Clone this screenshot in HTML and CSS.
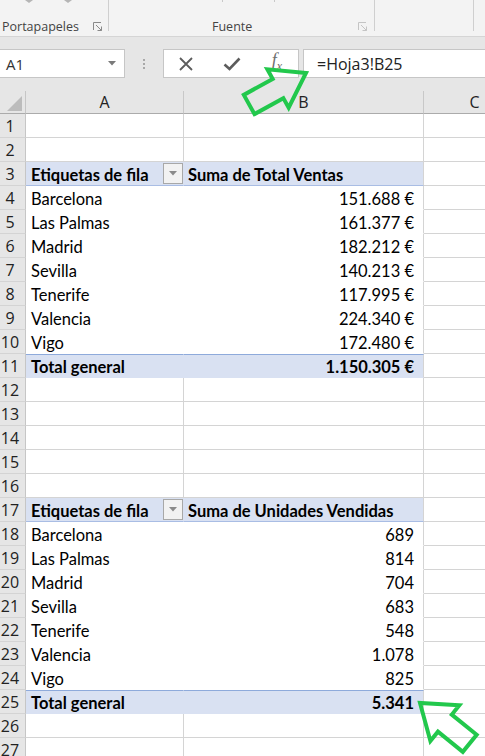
FILE: index.html
```html
<!DOCTYPE html>
<html lang="es">
<head>
<meta charset="utf-8">
<title>Excel</title>
<link rel="stylesheet" href="styles.css">
</head>
<body>
<div class="ribbon">
  <div class="grp g1">
    <div class="gtop"><span class="tri t1"></span><span class="tri t2"></span></div>
    <div class="glabel"><span class="lbl">Portapapeles</span><svg class="launch" width="10" height="10" viewBox="0 0 10 10"><path d="M0.5 8V0.5H8" fill="none" stroke="#8a8a8a"/><path d="M3 3L8.5 8.5M8.5 4.5V8.5H4.5" fill="none" stroke="#8a8a8a"/></svg></div>
  </div>
  <div class="sep"></div>
  <div class="grp g2">
    <div class="gtop"><span class="tick k1"></span><span class="tick k2"></span></div>
    <div class="glabel"><span class="lbl fuente">Fuente</span><svg class="launch l2" width="10" height="10" viewBox="0 0 10 10"><path d="M0.5 8V0.5H8" fill="none" stroke="#c4c4c4"/><path d="M3 3L8.5 8.5M8.5 4.5V8.5H4.5" fill="none" stroke="#c4c4c4"/></svg></div>
  </div>
  <div class="sep"></div>
  <div class="grp g3"></div>
  <div class="sep"></div>
</div>

<div class="fbar">
  <div class="namebox"><span>A1</span><svg width="8" height="5" viewBox="0 0 8 5"><path d="M0 0H8L4 4.5Z" fill="#7a7a7a"/></svg></div>
  <div class="grip"><i></i><i></i><i></i></div>
  <div class="fbtns">
    <span class="slot s1"><svg width="16" height="16" viewBox="0 0 16 16"><path d="M2 2L14 14M14 2L2 14" stroke="#5c5c5c" stroke-width="1.8" fill="none"/></svg></span>
    <span class="slot s2"><svg width="18" height="14" viewBox="0 0 18 14"><path d="M1.5 7.5L6.5 12L16.5 1.5" stroke="#5c5c5c" stroke-width="2.6" fill="none"/></svg></span>
    <span class="slot s3"><span class="fx">f<sub>x</sub></span></span>
  </div>
  <div class="finput">=Hoja3!B25</div>
</div>

<div class="sheet">
  <div class="corner"><svg width="26" height="23" viewBox="0 0 26 23"><path d="M7 20H22V5Z" fill="#bcbcbc"/></svg></div>
  <div class="ch">A</div>
  <div class="ch">B</div>
  <div class="ch">C</div>

  <div class="rh">1</div><div class="c"></div><div class="c"></div><div class="c"></div>
  <div class="rh">2</div><div class="c"></div><div class="c"></div><div class="c"></div>

  <div class="rh">3</div><div class="c pa ph hdr"><span>Etiquetas de fila</span><span class="dd"><svg width="8" height="5" viewBox="0 0 8 5"><path d="M0 0H8L4 4.5Z" fill="#8a8a8a"/></svg></span></div><div class="c pb ph">Suma de Total Ventas</div><div class="c"></div>
  <div class="rh">4</div><div class="c pa">Barcelona</div><div class="c pb num">151.688 €</div><div class="c"></div>
  <div class="rh">5</div><div class="c pa">Las Palmas</div><div class="c pb num">161.377 €</div><div class="c"></div>
  <div class="rh">6</div><div class="c pa">Madrid</div><div class="c pb num">182.212 €</div><div class="c"></div>
  <div class="rh">7</div><div class="c pa">Sevilla</div><div class="c pb num">140.213 €</div><div class="c"></div>
  <div class="rh">8</div><div class="c pa">Tenerife</div><div class="c pb num">117.995 €</div><div class="c"></div>
  <div class="rh">9</div><div class="c pa">Valencia</div><div class="c pb num">224.340 €</div><div class="c"></div>
  <div class="rh">10</div><div class="c pa">Vigo</div><div class="c pb num">172.480 €</div><div class="c"></div>
  <div class="rh">11</div><div class="c pa pt">Total general</div><div class="c pb pt num">1.150.305 €</div><div class="c"></div>

  <div class="rh">12</div><div class="c"></div><div class="c"></div><div class="c"></div>
  <div class="rh">13</div><div class="c"></div><div class="c"></div><div class="c"></div>
  <div class="rh">14</div><div class="c"></div><div class="c"></div><div class="c"></div>
  <div class="rh">15</div><div class="c"></div><div class="c"></div><div class="c"></div>
  <div class="rh">16</div><div class="c"></div><div class="c"></div><div class="c"></div>

  <div class="rh">17</div><div class="c pa ph hdr"><span>Etiquetas de fila</span><span class="dd"><svg width="8" height="5" viewBox="0 0 8 5"><path d="M0 0H8L4 4.5Z" fill="#8a8a8a"/></svg></span></div><div class="c pb ph">Suma de Unidades Vendidas</div><div class="c"></div>
  <div class="rh">18</div><div class="c pa">Barcelona</div><div class="c pb num">689</div><div class="c"></div>
  <div class="rh">19</div><div class="c pa">Las Palmas</div><div class="c pb num">814</div><div class="c"></div>
  <div class="rh">20</div><div class="c pa">Madrid</div><div class="c pb num">704</div><div class="c"></div>
  <div class="rh">21</div><div class="c pa">Sevilla</div><div class="c pb num">683</div><div class="c"></div>
  <div class="rh">22</div><div class="c pa">Tenerife</div><div class="c pb num">548</div><div class="c"></div>
  <div class="rh">23</div><div class="c pa">Valencia</div><div class="c pb num">1.078</div><div class="c"></div>
  <div class="rh">24</div><div class="c pa">Vigo</div><div class="c pb num">825</div><div class="c"></div>
  <div class="rh">25</div><div class="c pa pt">Total general</div><div class="c pb pt num">5.341</div><div class="c"></div>

  <div class="rh">26</div><div class="c"></div><div class="c"></div><div class="c"></div>
  <div class="rh">27</div><div class="c"></div><div class="c"></div><div class="c"></div>
</div>

<svg class="arrows" width="485" height="756" viewBox="0 0 485 756">
  <polygon points="0,0 -32,-22 -32,-11 -65,-11 -65,11 -32,11 -32,22" transform="translate(306,73) rotate(-29)" fill="none" stroke="#22c84c" stroke-width="4" stroke-linejoin="miter"/>
  <polygon points="0,0 -32,-23 -32,-11 -64,-11 -64,11 -32,11 -32,23" transform="translate(420,703) rotate(-141)" fill="none" stroke="#22c84c" stroke-width="4" stroke-linejoin="miter"/>
</svg>
</body>
</html>
```

FILE: styles.css
```css
html, body {
  margin: 0;
  padding: 0;
}
body {
  width: 485px;
  height: 756px;
  overflow: hidden;
  position: relative;
  background: #ffffff;
  font-family: "Open Sans", "Noto Sans", sans-serif;
  color: #222;
}

/* Ribbon */
.ribbon {
  height: 36px;
  background: #f3f3f3;
  border-bottom: 1px solid #d5d5d5;
  display: flex;
  align-items: flex-start;
}
.grp {
  height: 36px;
  display: flex;
  flex-direction: column;
  justify-content: space-between;
  padding-bottom: 1px;
  box-sizing: border-box;
}
.g1 { width: 108px; }
.g2 { width: 265px; }
.g3 { width: 98px; }
.sep {
  width: 1px;
  height: 31px;
  background: #cfcfcf;
}
.gtop {
  height: 4px;
  display: flex;
  align-items: flex-start;
}
.tri {
  width: 0;
  height: 0;
  border-left: 4px solid transparent;
  border-right: 4px solid transparent;
  border-top: 3px solid #b5b5b5;
}
.t1 { margin-left: 25px; }
.t2 { margin-left: 31px; }
.tick {
  width: 1px;
  height: 2px;
  background: #c8c8c8;
}
.k1 { margin-left: 113px; }
.k2 { margin-left: 51px; }
.glabel {
  height: 18px;
  display: flex;
  align-items: center;
  font-size: 12.5px;
  color: #444;
}
.g1 .glabel { padding-left: 2px; }
.lbl { white-space: nowrap; }
.launch { margin-left: auto; margin-right: 5px; margin-top: 2px; }
.fuente { margin-left: 103px; }
.l2 { margin-right: 6px; }

/* Formula bar */
.fbar {
  height: 54px;
  background: #e6e6e6;
  display: flex;
  align-items: flex-start;
  padding-top: 12px;
  box-sizing: border-box;
}
.namebox {
  width: 125px;
  height: 29px;
  box-sizing: border-box;
  background: #fff;
  border: 1px solid #c6c6c6;
  border-left: none;
  display: flex;
  align-items: center;
  justify-content: space-between;
  padding: 0 8px 0 6px;
  font-size: 15px;
  color: #333;
}
.grip {
  width: 38px;
  height: 29px;
  display: flex;
  flex-direction: column;
  align-items: center;
  justify-content: center;
  gap: 2px;
}
.grip i {
  display: block;
  width: 2px;
  height: 2px;
  background: #a8a8a8;
}
.fbtns {
  width: 136px;
  height: 29px;
  box-sizing: border-box;
  background: #fff;
  border: 1px solid #c6c6c6;
  display: flex;
  align-items: center;
}
.slot {
  display: flex;
  align-items: center;
  justify-content: center;
  height: 27px;
}
.s1 { width: 44px; }
.s2 { width: 48px; }
.s3 { width: 42px; }
.fx {
  font-family: "Liberation Serif", "DejaVu Serif", serif;
  font-style: italic;
  font-size: 18px;
  color: #6e6e6e;
  line-height: 1;
  margin-top: -4px;
}
.fx sub {
  font-size: 12px;
  vertical-align: -4px;
}
.finput {
  flex: 1;
  height: 29px;
  margin-left: 4px;
  box-sizing: border-box;
  background: #fff;
  border: 1px solid #c6c6c6;
  border-right: none;
  display: flex;
  align-items: center;
  padding-left: 13px;
  font-size: 16px;
  color: #222;
  white-space: nowrap;
}

/* Sheet */
.sheet {
  display: grid;
  grid-template-columns: 26px 158px 240px 102px;
  grid-template-rows: 23px;
  grid-auto-rows: 24px;
  width: 526px;
}
.corner {
  background: #e6e6e6;
  border-right: 1px solid #c6c6c6;
  border-bottom: 1px solid #ababab;
  box-sizing: border-box;
}
.corner svg { display: block; }
.ch {
  background: #e6e6e6;
  border-right: 1px solid #c8c8c8;
  border-bottom: 1px solid #ababab;
  box-sizing: border-box;
  display: flex;
  align-items: center;
  justify-content: center;
  font-size: 16px;
  color: #222;
}
.rh {
  background: #e6e6e6;
  border-right: 1px solid #c6c6c6;
  border-bottom: 1px solid #d4d4d4;
  box-sizing: border-box;
  display: flex;
  align-items: center;
  justify-content: center;
  padding-right: 5px;
  font-size: 16px;
  color: #222;
}
.c {
  border-right: 1px solid #d4d4d4;
  border-bottom: 1px solid #d4d4d4;
  box-sizing: border-box;
  display: flex;
  align-items: center;
  padding: 2px 5px 0 5px;
  font-family: "Lato", "Liberation Sans", sans-serif;
  font-size: 16.5px;
  color: #000;
  white-space: nowrap;
  overflow: hidden;
}
.pa {
  border-right-color: transparent;
  border-bottom-color: transparent;
}
.pb {
  border-bottom-color: transparent;
  padding-left: 4px;
}
.num {
  justify-content: flex-end;
  padding-right: 9px;
}
.ph {
  background: #d9e1f2;
  font-weight: bold;
  border-bottom-color: #a9bde4;
}
.pa.ph { border-right-color: #d9e1f2; }
.hdr {
  justify-content: space-between;
  padding-right: 0;
  padding-top: 0;
}
.hdr > span:first-child { margin-top: 2px; }
.dd {
  width: 20px;
  height: 21px;
  box-sizing: border-box;
  border: 1px solid #a8a8a8;
  background: #f2f2f2;
  display: flex;
  align-items: center;
  justify-content: center;
}
.pt {
  background: #d9e1f2;
  font-weight: bold;
  border-top: 1px solid #8eaadb;
  border-bottom-color: #d9e1f2;
}
.pa.pt { border-right-color: #d9e1f2; }

/* Overlay arrows */
.arrows {
  position: absolute;
  left: 0;
  top: 0;
  pointer-events: none;
}
```
